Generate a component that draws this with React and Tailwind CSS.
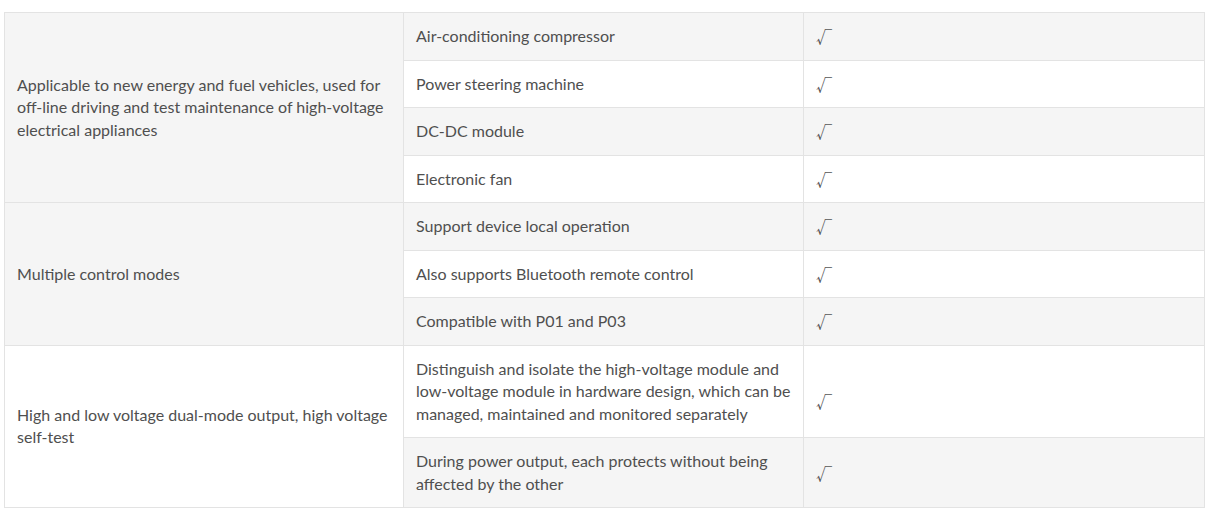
const GROUPS = [
  {
    title:
      "Applicable to new energy and fuel vehicles, used for off-line driving and test maintenance of high-voltage electrical appliances",
    items: [
      "Air-conditioning compressor",
      "Power steering machine",
      "DC-DC module",
      "Electronic fan",
    ],
  },
  {
    title: "Multiple control modes",
    items: [
      "Support device local operation",
      "Also supports Bluetooth remote control",
      "Compatible with P01 and P03",
    ],
  },
  {
    title: "High and low voltage dual-mode output, high voltage self-test",
    items: [
      "Distinguish and isolate the high-voltage module and low-voltage module in hardware design, which can be managed, maintained and monitored separately",
      "During power output, each protects without being affected by the other",
    ],
  },
];

const cell = "border border-[#e3e3e3] px-3 py-3 align-middle";

export default function App() {
  let idx = 0;
  const rows = [];
  GROUPS.forEach((g, gi) => {
    g.items.forEach((item, i) => {
      const striped = idx % 2 === 0;
      // the long three-line row sits its tick a bit lower in the original
      const low = item.length > 100;
      rows.push(
        <tr key={`${gi}-${i}`} className={striped ? "bg-[#f5f5f5]" : "bg-white"}>
          {i === 0 && (
            <td rowSpan={g.items.length} className={cell}>
              {g.title}
            </td>
          )}
          <td className={cell}>{item}</td>
          <td className={cell}>
            <div
              className={`h-[22px] overflow-hidden leading-[22px] font-['Noto_Sans_CJK_SC',sans-serif] text-[16px] text-[#555] ${
                low ? "mt-5" : ""
              }`}
            >
              √
            </div>
          </td>
        </tr>
      );
      idx++;
    });
  });

  return (
    <div className="bg-white min-h-[524px] pt-3 pl-1 font-['Lato',sans-serif] text-[16px] leading-[22.5px] text-[#4f4f4f]">
      <table className="w-[1200px] table-fixed border-collapse">
        <colgroup>
          <col className="w-[399px]" />
          <col className="w-[400px]" />
          <col className="w-[401px]" />
        </colgroup>
        <tbody>{rows}</tbody>
      </table>
    </div>
  );
}
